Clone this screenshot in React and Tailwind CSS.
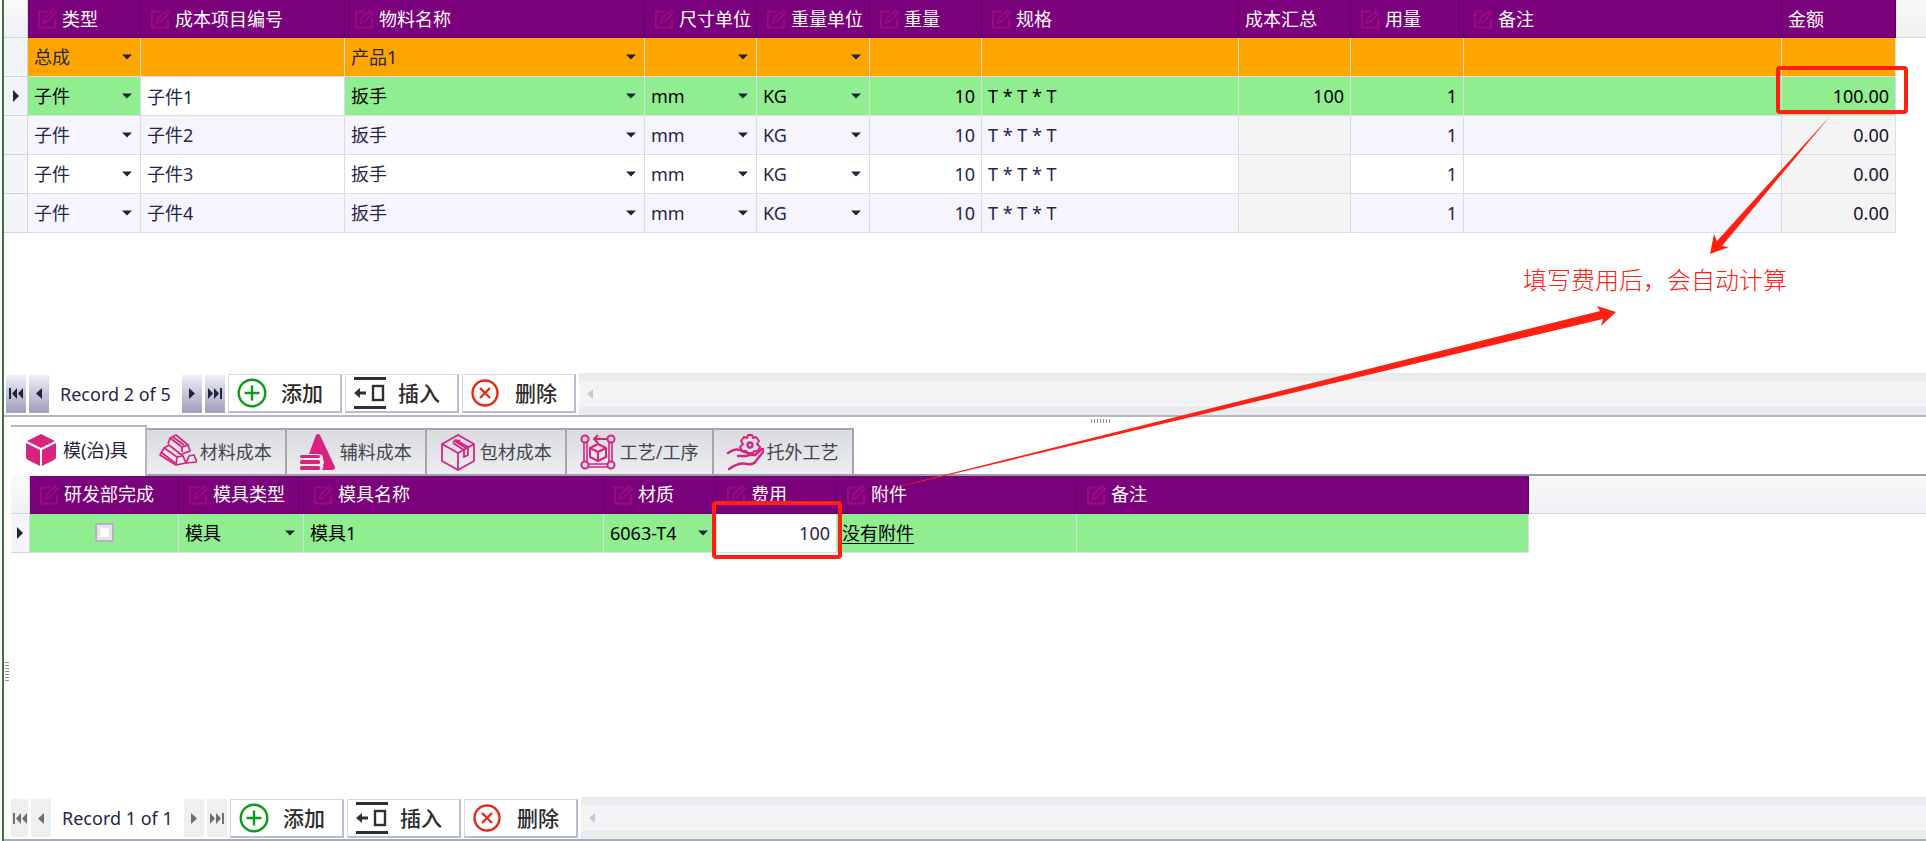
import React, { useState } from "react";

const COST_COLUMNS = [
  { key: "type", label: "类型", width: "w-[113px]", editable: true, options: ["总成", "子件"] },
  { key: "code", label: "成本项目编号", width: "w-[204px]", editable: true },
  { key: "name", label: "物料名称", width: "w-[300px]", editable: true, options: ["产品1", "扳手"] },
  { key: "sizeUnit", label: "尺寸单位", width: "w-[112px]", editable: true, options: ["", "mm"] },
  { key: "weightUnit", label: "重量单位", width: "w-[113px]", editable: true, options: ["", "KG"] },
  { key: "weight", label: "重量", width: "w-[112px]", editable: true, numeric: true },
  { key: "spec", label: "规格", width: "w-[257px]", editable: true },
  { key: "total", label: "成本汇总", width: "w-[112px]", numeric: true },
  { key: "qty", label: "用量", width: "w-[113px]", editable: true, numeric: true },
  { key: "remark", label: "备注", width: "w-[318px]", editable: true },
  { key: "amount", label: "金额", width: "w-[114px]", numeric: true },
];

const part = (code, total, amount) => ({
  type: "子件", code, name: "扳手", sizeUnit: "mm", weightUnit: "KG",
  weight: "10", spec: "T * T * T", total, qty: "1", remark: "", amount,
});

const COST_ROWS = [
  { type: "总成", name: "产品1", assembly: true },
  part("子件1", "100", "100.00"),
  part("子件2", "", "0.00"),
  part("子件3", "", "0.00"),
  part("子件4", "", "0.00"),
];

const MOLD_COLUMNS = [
  { key: "done", label: "研发部完成", width: "w-[149px]", editable: true, checkbox: true },
  { key: "type", label: "模具类型", width: "w-[125px]", editable: true, options: ["模具"] },
  { key: "name", label: "模具名称", width: "w-[300px]", editable: true },
  { key: "material", label: "材质", width: "w-[113px]", editable: true, options: ["6063-T4"] },
  { key: "fee", label: "费用", width: "w-[120px]", editable: true, numeric: true },
  { key: "file", label: "附件", width: "w-[240px]", editable: true, link: true },
  { key: "remark", label: "备注", width: "w-[452px]", editable: true },
];

const MOLD_ROWS = [
  { done: false, type: "模具", name: "模具1", material: "6063-T4", fee: "100", file: "没有附件", remark: "" },
];

const EditIcon = () => (
  <svg width="20" height="21" viewBox="0 0 20 21" fill="none" stroke="#9c0a82" strokeWidth="2" className="shrink-0">
    <path d="M11 3.5H2v16h16V11" />
    <path d="M6.5 15l1-4.5L16 2l3 3-8.5 8.5z" strokeWidth="1.6" />
    <path d="M14 4l3 3" strokeWidth="1.6" />
  </svg>
);

const Caret = () => (
  <svg width="10" height="6" viewBox="0 0 10 6" fill="#22223c" className="pointer-events-none absolute right-2 top-4">
    <path d="M0 .5h10L5 5.5z" />
  </svg>
);

const CubeIcon = () => (
  <svg width="30" height="34" viewBox="0 0 30 34" fill="#d9247f">
    <path d="M15 1l14 7-14 7L1 8z" />
    <path d="M0 10l14 7v16L2 27Q0 26 0 24zM30 10l-14 7v16l12-6q2-1 2-3z" />
  </svg>
);

const IngotIcon = () => (
  <svg width="38" height="38" viewBox="0 0 38 38" fill="none" stroke="#d9247f" strokeWidth="1.7" strokeLinejoin="round">
    <path d="M9 11l2-6 6-3 12 10 2 6-8 3" />
    <path d="M11 5l12 9 6-2M23 14v5M14 4l11 8" />
    <path d="M1 22l4-7 5-3 14 11 3 7-10 2z" />
    <path d="M17 32l1-8 6-1M5 15l13 9M2 19l14 11" />
    <path d="M27 30l3-7 5-1 3 7z" />
  </svg>
);

const ConeIcon = () => (
  <svg width="38" height="38" viewBox="0 0 38 38" fill="#d9247f">
    <path d="M17 2q2-2 4 0l15 32q0 3-3 3H23q2-2 1-5 2-3 0-5 1-6-5-6H10z" />
    <rect x="1" y="22" width="20" height="3" rx="1.5" />
    <rect x="1" y="27" width="20" height="4" rx="1.5" />
    <rect x="1" y="33" width="20" height="4" rx="1.5" />
  </svg>
);

const BoxIcon = () => (
  <svg width="38" height="38" viewBox="0 0 38 38" fill="none" stroke="#d9247f" strokeWidth="1.8" strokeLinejoin="round">
    <path d="M19 2l16 9v17l-16 9-16-9V11z" />
    <path d="M3 11l16 9 16-9M19 20v17" />
    <path d="M14 9l3-2 12 7v8l-4 2v-7L14 10M21 7l-4 2 10 6" />
  </svg>
);

const ProcessIcon = () => (
  <svg width="38" height="38" viewBox="0 0 38 38" fill="none" stroke="#d9247f" strokeWidth="2" strokeLinejoin="round">
    <circle cx="6" cy="6" r="3.5" />
    <circle cx="32" cy="6" r="3.5" />
    <circle cx="6" cy="32" r="3.5" />
    <circle cx="32" cy="32" r="3.5" />
    <path d="M5 9v20M8 9v20M30 9v20M33 9v20M9 31h20M9 34h20" strokeWidth="1.6" />
    <path d="M28 6H16M19 2l-4 4 4 4" />
    <path d="M19 11l8 4v9l-8 4-8-4v-9zM11 15l8 4 8-4M19 19v9" />
  </svg>
);

const HandGearIcon = () => (
  <svg width="38" height="38" viewBox="0 0 38 38" fill="none" stroke="#d9247f" strokeWidth="2.4" strokeLinejoin="round" strokeLinecap="round">
    <circle cx="24" cy="12" r="2.5" />
    <path d="M22 2h4l1 3 3-1 3 4-2 3 3 3-2 4-4 0-1 2h-6l-1-2h-4l-2-4 3-3-2-3 3-4 3 1z" strokeWidth="2" />
    <path d="M2 20q7-5 12-3l4 2q4 0 5 2 0 2-4 2h-7M23 22l6 0 7-6q3 0 1 3l-8 10q-2 3-8 2-8-2-18 5" />
  </svg>
);

const TABS = [
  { id: "mold", label: "模(治)具", icon: <CubeIcon /> },
  { id: "material", label: "材料成本", icon: <IngotIcon /> },
  { id: "auxiliary", label: "辅料成本", icon: <ConeIcon /> },
  { id: "package", label: "包材成本", icon: <BoxIcon /> },
  { id: "process", label: "工艺/工序", icon: <ProcessIcon /> },
  { id: "outsource", label: "托外工艺", icon: <HandGearIcon /> },
];

const CellContent = ({ column, value, editing }) => {
  if (column.checkbox) {
    return (
      <input type="checkbox" aria-label={column.label} defaultChecked={value}
        className="mx-auto block size-[19px] appearance-none border-2 border-[#b2b4c0] bg-white shadow-[inset_0_0_0_3px_#e1e4ea]" />
    );
  }
  if (column.options) {
    return (
      <div className="relative">
        <select aria-label={column.label} defaultValue={value || ""}
          className="block h-[38px] w-full appearance-none bg-transparent pl-[6px] pr-6 outline-none">
          {!column.options.includes(value || "") && <option value="" />}
          {column.options.map((o) => <option key={o} value={o}>{o}</option>)}
        </select>
        <Caret />
      </div>
    );
  }
  if (editing) {
    return (
      <input type="text" aria-label={column.label} defaultValue={value}
        className={`block h-[38px] w-full bg-white px-[6px] text-[#26264a] outline-none ${column.numeric ? "text-right" : ""}`} />
    );
  }
  if (column.link) {
    return <a href="#file" className="block px-[5px] underline underline-offset-3">{value}</a>;
  }
  return <div className={`px-[6px] ${column.numeric ? "text-right" : ""}`}>{value}</div>;
};

const cellColor = (row, column, index, focused) => {
  if (row.assembly) return "bg-[#ffa500] text-[#26263a]";
  if (index === focused) return "bg-[#90ee90] text-black";
  if (!column.editable) return "bg-[#f4f4f4] text-[#16162c]";
  return index % 2 ? "bg-white text-[#26264a]" : "bg-[#f6f4fd] text-[#26264a]";
};

const DataGrid = ({ label, columns, rows, focused, editKey, indicator }) => (
  <table aria-label={label} className="w-full table-fixed border-separate border-spacing-0 text-left text-[18px] leading-6">
    <colgroup>
      <col className={indicator} />
      {columns.map((c) => <col key={c.key} className={c.width} />)}
      <col />
    </colgroup>
    <thead>
      <tr className="h-[38px]">
        <td className="border-b border-r border-[#d3d5dc] bg-linear-to-b from-[#fafafa] to-[#f0f1f4]" />
        {columns.map((c) => (
          <th key={c.key} scope="col" className="border-b border-r border-[#66006a] bg-[#7b007b] p-0 font-normal text-white">
            <div className={`flex items-center gap-[5px] whitespace-nowrap ${c.editable ? "pl-[9px]" : "pl-[6px]"}`}>
              {c.editable && <EditIcon />}
              {c.label}
            </div>
          </th>
        ))}
        <td className="border-b border-[#d3d5dc] bg-linear-to-b from-[#f8f8f9] to-[#f0f1f4]" />
      </tr>
    </thead>
    <tbody>
      {rows.map((row, i) => (
        <tr key={i} className="h-[39px]">
          <td className="border-b border-r border-[#d3d5dc] bg-[#f3f5f8] p-0">
            {i === focused && (
              <svg width="6" height="12" viewBox="0 0 6 12" fill="#22223c" className="mx-auto">
                <path d="M0 0l6 6-6 6z" />
              </svg>
            )}
          </td>
          {columns.map((c) => (
            <td key={c.key} className={`border-b border-r border-[#dcdde4] p-0 ${cellColor(row, c, i, focused)}`}>
              <CellContent column={c} value={row[c.key]} editing={i === focused && c.key === editKey} />
            </td>
          ))}
          <td />
        </tr>
      ))}
    </tbody>
  </table>
);

const PAGER = {
  first: { label: "First record", path: "M0 1h2v11H0zM8 1v11L3 6.5zM14 1v11L9 6.5z", w: 14 },
  prev: { label: "Previous record", path: "M6 1v11L0 6.5z", w: 6 },
  next: { label: "Next record", path: "M0 1v11l6-5.5z", w: 6 },
  last: { label: "Last record", path: "M0 1v11l5-5.5zM6 1v11l5-5.5zM12 1h2v11h-2z", w: 14 },
};

const PagerButton = ({ kind, disabled, narrow }) => {
  const { label, path, w } = PAGER[kind];
  return (
    <button type="button" aria-label={label} disabled={disabled}
      className={`flex h-[38px] shrink-0 items-center justify-center ${narrow ? "w-[17px]" : "w-5"}
        ${disabled ? "bg-[#efefef] text-[#6f6f72]" : "bg-linear-to-b from-[#efeff7] to-[#a19ebb] text-[#22223c]"}`}>
      <svg width={w} height="13" viewBox={`0 0 ${w} 13`} fill="currentColor" className="shrink-0">
        <path d={path} />
      </svg>
    </button>
  );
};

const AddIcon = () => (
  <svg width="30" height="30" viewBox="0 0 30 30" fill="none" stroke="#0f9a1c" strokeWidth="2.4">
    <circle cx="15" cy="15" r="13.3" />
    <path d="M15 7.5v15M7.5 15h15" />
  </svg>
);

const InsertIcon = () => (
  <svg width="32" height="34" viewBox="0 0 32 34" fill="none" stroke="#303030" strokeWidth="2.4">
    <path d="M0 2.5h32M0 31.5h32" strokeWidth="3" />
    <rect x="19" y="10" width="10" height="14" />
    <path d="M3 17h9" strokeWidth="3" />
    <path d="M0 17l6-5v10z" fill="#303030" stroke="none" />
  </svg>
);

const DeleteIcon = () => (
  <svg width="28" height="28" viewBox="0 0 28 28" fill="none" stroke="#e32c18" strokeWidth="2.4">
    <circle cx="14" cy="14" r="12.5" />
    <path d="M9 9l10 10M19 9L9 19" />
  </svg>
);

const ActionButton = ({ icon, children }) => (
  <button type="button"
    className="flex h-[39px] w-[114px] shrink-0 items-center border border-b-2 border-r-2 border-[#d9d7ea] border-b-[#bdbad6] border-r-[#bdbad6] bg-white pl-2 text-[21px] font-medium leading-6 text-[#2c2c2c]">
    <span className="flex w-11 shrink-0 items-center">{icon}</span>
    {children}
  </button>
);

const Navigator = ({ text, disabled, narrow }) => (
  <div className="flex h-[42px] items-center gap-[3px]">
    <PagerButton kind="first" disabled={disabled} narrow={narrow} />
    <PagerButton kind="prev" disabled={disabled} />
    <span className="w-[127px] shrink-0 whitespace-nowrap pl-2 text-[18px] leading-6 text-[#26264a]">{text}</span>
    <PagerButton kind="next" disabled={disabled} />
    <PagerButton kind="last" disabled={disabled} />
    <ActionButton icon={<AddIcon />}>添加</ActionButton>
    <ActionButton icon={<InsertIcon />}>插入</ActionButton>
    <ActionButton icon={<DeleteIcon />}>删除</ActionButton>
    <div className="flex flex-1 items-center self-stretch bg-[#eaebef]">
      <div className="flex h-[26px] flex-1 items-center bg-[#f4f4f7] pl-2">
        <svg width="6" height="10" viewBox="0 0 6 10" fill="#c9cad1"><path d="M6 0v10L0 5z" /></svg>
      </div>
    </div>
  </div>
);

// Red call-outs drawn over both grids
const Annotations = () => (
  <div className="pointer-events-none absolute inset-0 overflow-hidden">
    <div className="absolute left-[1776px] top-[66px] h-[48px] w-[132px] rounded-[4px] border-4 border-[#ff2012]" />
    <div className="absolute left-[712px] top-[501px] h-[58px] w-[130px] rounded-[4px] border-4 border-[#ff2012]" />
    <svg width="1926" height="841" viewBox="0 0 1926 841" fill="#ff2012" className="absolute left-0 top-0">
      <path d="M1831 115L1717 241 1714 234 1710 254 1729 247 1722 246z" />
      <path d="M856 497L1600 311 1597 306 1616 312 1601 326 1603 319z" />
    </svg>
    <p className="absolute left-[1523px] top-[264px] whitespace-nowrap text-[24px] font-light leading-8 text-[#ff2012]">填写费用后，会自动计算</p>
  </div>
);

const App = () => {
  const [activeTab, setActiveTab] = useState("mold");

  return (
    <div className="relative flex min-h-screen flex-col overflow-hidden bg-white pl-[2px] font-['Noto_Sans','Noto_Sans_CJK_SC',sans-serif]">
      <div className="flex flex-1 flex-col border-l-2 border-[#3b7440]">
        <section className="flex flex-1 basis-0 flex-col justify-between border-b-2 border-[#b4b6c0]">
          <DataGrid label="成本项目" columns={COST_COLUMNS} rows={COST_ROWS} focused={1} editKey="code" indicator="w-6" />
          <div className="pl-[2px]">
            <Navigator text="Record 2 of 5" />
          </div>
        </section>

        <div className="flex h-2 items-center pl-[1087px]">
          <div className="h-1 w-5 bg-[repeating-linear-gradient(90deg,#8f919c_0_1px,transparent_1px_3px)]" />
        </div>

        <section className="flex flex-1 basis-0 border-b-2 border-[#a8aab4]">
          <div className="flex w-[7px] shrink-0 items-center pl-px pt-20">
            <div className="h-5 w-1 bg-[repeating-linear-gradient(180deg,#8f919c_0_1px,transparent_1px_3px)]" />
          </div>
          <div className="flex min-w-0 flex-1 flex-col">
            <div role="tablist" className="flex items-end border-b-2 border-[#9c9fa9]">
              {TABS.map((tab) => {
                const active = tab.id === activeTab;
                return (
                  <button key={tab.id} type="button" role="tab" aria-selected={active} onClick={() => setActiveTab(tab.id)}
                    className={`flex items-center whitespace-nowrap text-[18px] leading-6
                      ${active
                        ? "-mb-[2px] h-[51px] gap-[7px] border-r-2 border-t-2 border-[#b4b7c0] bg-white pb-[2px] pl-[15px] pr-[17px] text-[#26263a]"
                        : "h-[46px] gap-[3px] border-r-2 border-t-2 border-[#a3a6b0] bg-linear-to-b from-[#dadbdf] to-[#edeef1] pl-3 pr-[13px] text-[#45454f]"}`}>
                    {tab.icon}
                    {tab.label}
                  </button>
                );
              })}
            </div>
            <DataGrid label="模具" columns={MOLD_COLUMNS} rows={MOLD_ROWS} focused={0} editKey="fee" indicator="w-[19px]" />
            <div className="mt-auto">
              <Navigator text="Record 1 of 1" disabled narrow />
            </div>
          </div>
        </section>
      </div>
      <Annotations />
    </div>
  );
};

export default App;
